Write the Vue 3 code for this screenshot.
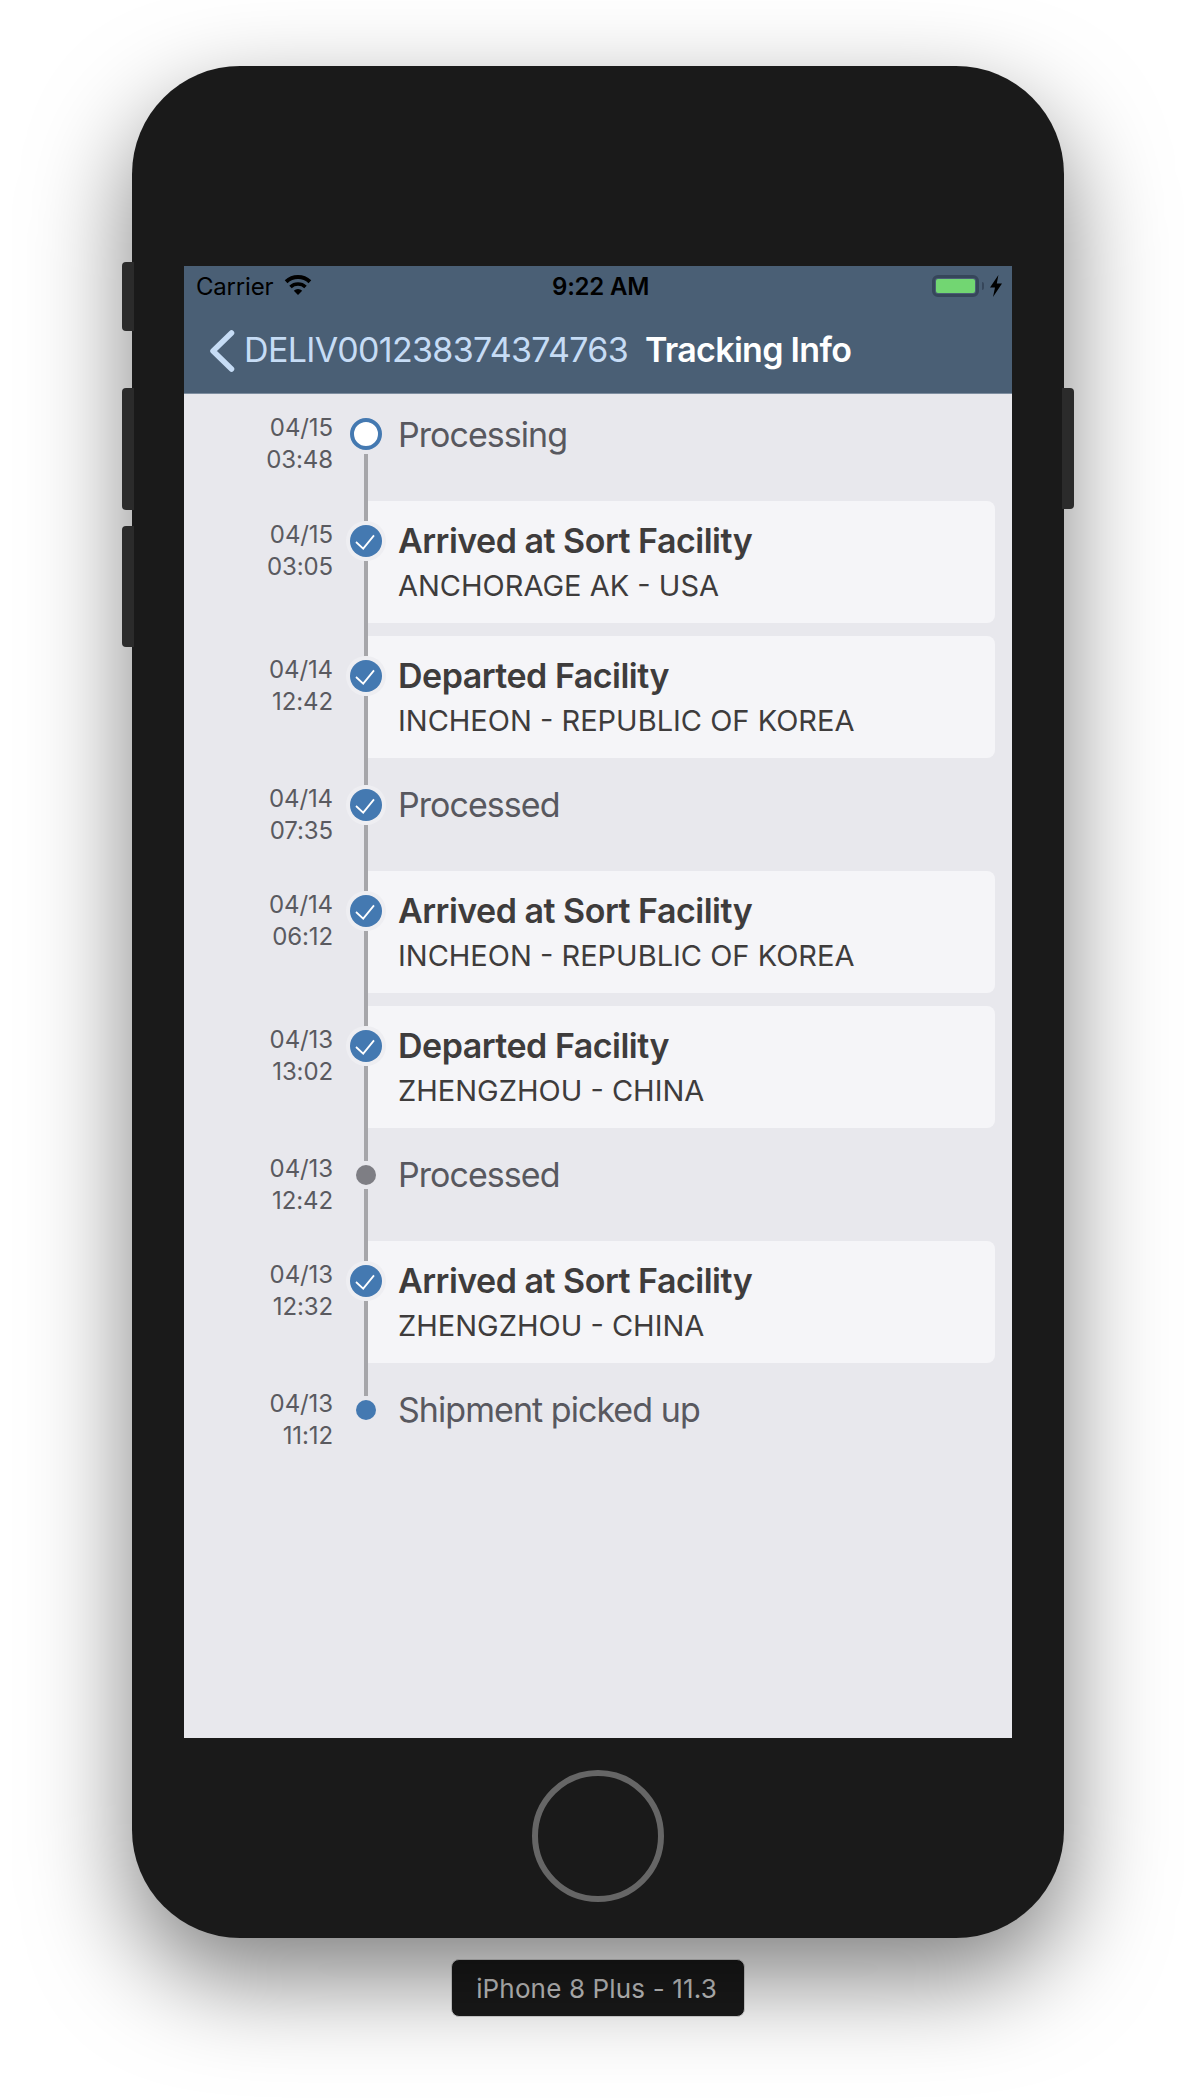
<template>
  <div class="page">
    <div class="phone">
      <div class="btn btn-mute"></div>
      <div class="btn btn-up"></div>
      <div class="btn btn-down"></div>
      <div class="btn btn-power"></div>

      <div class="screen">
        <div class="status">
          <span class="carrier">Carrier</span>
          <svg class="wifi" viewBox="0 0 28 20" width="28" height="20">
            <path d="M2.1 6.7 A17.5 17.5 0 0 1 25.9 6.7" stroke="#000" stroke-width="4" fill="none" />
            <path d="M6.5 12 A11 11 0 0 1 21.5 12" stroke="#000" stroke-width="3.6" fill="none" />
            <path d="M14 20 L9.8 15.8 A6 6 0 0 1 18.2 15.8 Z" fill="#000" />
          </svg>
          <span class="clock">9:22 AM</span>
          <div class="battery"><div class="battery-fill"></div></div>
          <div class="battery-cap"></div>
          <svg class="bolt" viewBox="0 0 12 22" width="12" height="22">
            <path d="M8.4 0 L0 12.6 L5 12.6 L3 22 L12 8.4 L6.8 8.4 Z" fill="#000" />
          </svg>
        </div>
        <div class="nav">
          <svg class="chevron" viewBox="0 0 26 42" width="26" height="42">
            <path d="M22.5 3 L4 21 L22.5 39" stroke="#c6dcf5" stroke-width="5.5" stroke-linecap="round" stroke-linejoin="round" fill="none" />
          </svg>
          <span class="back">DELIV001238374374763</span>
          <span class="title">Tracking Info</span>
        </div>

        <div class="list">
          <div v-for="(ev, i) in events" :key="i" class="row" :class="[ev.place ? 'with-card' : 'plain', 'k-' + ev.kind]">
            <div class="time">
              <div>{{ ev.date }}</div>
              <div>{{ ev.time }}</div>
            </div>
            <div class="rail">
              <div class="seg seg-top" :class="{ hidden: i === 0 }"></div>
              <div class="node">
                <div class="dot">
                  <svg v-if="ev.kind === 'check'" viewBox="0 0 32 32" width="32" height="32">
                    <path d="M6 17 L13.2 23.6 L24 10.4" stroke="#fff" stroke-width="1.8" fill="none" />
                  </svg>
                </div>
              </div>
              <div class="seg seg-bottom" :class="{ hidden: i === events.length - 1 }"></div>
            </div>
            <div v-if="ev.place" class="card">
              <div class="card-title">{{ ev.label }}</div>
              <div class="card-place">{{ ev.place }}</div>
            </div>
            <div v-else class="plain-label">{{ ev.label }}</div>
          </div>
        </div>
      </div>

      <div class="chin">
        <div class="home"></div>
      </div>
    </div>
    <div class="device-label">iPhone 8 Plus - 11.3</div>
  </div>
</template>

<script setup>
const events = [
  { date: '04/15', time: '03:48', label: 'Processing', kind: 'ring' },
  { date: '04/15', time: '03:05', label: 'Arrived at Sort Facility', place: 'ANCHORAGE AK - USA', kind: 'check' },
  { date: '04/14', time: '12:42', label: 'Departed Facility', place: 'INCHEON - REPUBLIC OF KOREA', kind: 'check' },
  { date: '04/14', time: '07:35', label: 'Processed', kind: 'check' },
  { date: '04/14', time: '06:12', label: 'Arrived at Sort Facility', place: 'INCHEON - REPUBLIC OF KOREA', kind: 'check' },
  { date: '04/13', time: '13:02', label: 'Departed Facility', place: 'ZHENGZHOU - CHINA', kind: 'check' },
  { date: '04/13', time: '12:42', label: 'Processed', kind: 'gray' },
  { date: '04/13', time: '12:32', label: 'Arrived at Sort Facility', place: 'ZHENGZHOU - CHINA', kind: 'check' },
  { date: '04/13', time: '11:12', label: 'Shipment picked up', kind: 'blue' }
]
</script>

<style>
html, body {
  margin: 0;
  background: #fff;
}
</style>

<style scoped>
.page {
  height: 2100px;
  overflow: hidden;
  padding-top: 66px;
  box-sizing: border-box;
  display: flex;
  flex-direction: column;
  align-items: center;
  font-family: Inter, "Liberation Sans", sans-serif;
}

.phone {
  position: relative;
  width: 932px;
  box-sizing: border-box;
  padding: 200px 52px 0;
  background: #1a1a1a;
  border-radius: 108px;
  box-shadow: 0 40px 100px rgba(0, 0, 0, 0.5);
}

.btn {
  position: absolute;
  width: 12px;
  background: #2b2b2b;
}

.btn-mute { left: -10px; top: 196px; height: 69px; border-radius: 4px 0 0 4px; }
.btn-up { left: -10px; top: 322px; height: 122px; border-radius: 4px 0 0 4px; }
.btn-down { left: -10px; top: 460px; height: 121px; border-radius: 4px 0 0 4px; }
.btn-power { right: -10px; top: 322px; height: 121px; border-radius: 0 4px 4px 0; }

.screen {
  height: 1472px;
  background: #e8e8ed;
  display: flex;
  flex-direction: column;
}

.status {
  height: 40px;
  flex: none;
  box-sizing: border-box;
  background: #4a5f75;
  display: flex;
  align-items: center;
  padding: 1px 10px 0 12px;
  color: #000;
  font-size: 24px;
}

.carrier {
  width: 88px;
  letter-spacing: -0.2px;
}

.wifi {
  margin-top: -3px;
}

.clock {
  margin-left: 240px;
  font-weight: 600;
  width: 98px;
  white-space: nowrap;
  letter-spacing: -0.2px;
}

.battery {
  margin-left: 282px;
  width: 47px;
  height: 22px;
  box-sizing: border-box;
  border: 3px solid #36465a;
  border-radius: 6px;
  padding: 1px;
  display: flex;
  margin-top: -2px;
}

.battery-fill {
  flex: 1;
  background: #72d672;
  border-radius: 2px;
}

.battery-cap {
  width: 2px;
  height: 8px;
  margin-left: 3px;
  margin-top: -2px;
  background: #36465a;
  border-radius: 0 2px 2px 0;
}

.bolt {
  margin-left: 6px;
  margin-top: -2px;
}

.nav {
  height: 88px;
  flex: none;
  box-sizing: border-box;
  background: #4a5f75;
  border-bottom: 1px solid #7e8ea0;
  display: flex;
  align-items: center;
  font-size: 34px;
  padding-left: 25px;
  white-space: nowrap;
}

.chevron {
  flex: none;
  margin-top: 2px;
}

.back {
  margin-left: 9px;
  color: #c6dcf5;
  width: 401px;
  letter-spacing: -0.66px;
}

.title {
  color: #fff;
  font-weight: 600;
  letter-spacing: -0.7px;
}

.list {
  padding-top: 6px;
}

.row {
  display: flex;
  align-items: stretch;
}

.row.plain {
  height: 100px;
}

.row.with-card {
  height: 135px;
}

.row:first-child {
  height: 101px;
}

.time {
  width: 149px;
  flex: none;
  text-align: right;
  font-size: 24px;
  line-height: 32px;
  color: #5a5a60;
  box-sizing: border-box;
  padding-top: 12px;
  letter-spacing: -0.1px;
}

.with-card .time {
  padding-top: 18px;
}

.rail {
  width: 32px;
  flex: none;
  margin-left: 17px;
  display: flex;
  flex-direction: column;
  align-items: center;
  position: relative;
  z-index: 1;
}

.seg {
  width: 4px;
  background: #a6a6aa;
}

.seg.hidden {
  background: transparent;
}

.seg-top {
  height: 20px;
  flex: none;
}

.plain.k-check .seg-top,
.plain.k-ring .seg-top {
  height: 14px;
}

.seg-bottom {
  flex: 1;
}

.node {
  height: 28px;
  flex: none;
  display: flex;
  align-items: center;
  justify-content: center;
}

.k-check .node,
.k-ring .node {
  height: 40px;
}

.dot {
  border-radius: 50%;
  box-sizing: border-box;
  flex: none;
}

.dot svg {
  display: block;
}

.k-check .dot {
  width: 32px;
  height: 32px;
  background: #4479b1;
  box-shadow: 0 0 0 4px #eeeef2;
}

.k-ring .dot {
  width: 32px;
  height: 32px;
  background: #fff;
  border: 4px solid #4479b1;
}

.k-gray .dot {
  width: 20px;
  height: 20px;
  background: #7e7e84;
}

.k-blue .dot {
  width: 20px;
  height: 20px;
  background: #4479b1;
}

.plain-label {
  margin-left: 16px;
  padding-top: 14px;
  font-size: 34px;
  line-height: 40px;
  color: #58585f;
  white-space: nowrap;
  letter-spacing: -0.95px;
}

.row:first-child .plain-label {
  padding-top: 15px;
}

.card {
  flex: none;
  width: 627px;
  height: 122px;
  margin-left: -14px;
  box-sizing: border-box;
  padding: 18px 0 0 30px;
  background: #f5f5f8;
  border-radius: 0 8px 8px 0;
  color: #3e3c3c;
  white-space: nowrap;
}

.card-title {
  font-size: 34px;
  line-height: 44px;
  font-weight: 600;
  letter-spacing: -0.5px;
}

.card-place {
  font-size: 29px;
  line-height: 45px;
}

.chin {
  height: 200px;
  box-sizing: border-box;
  padding-top: 32px;
  display: flex;
  justify-content: center;
}

.home {
  width: 132px;
  height: 132px;
  box-sizing: border-box;
  border: 6px solid #666;
  border-radius: 50%;
}

.device-label {
  margin-top: 21px;
  width: 294px;
  height: 58px;
  box-sizing: border-box;
  background: #1a1a1a;
  border-radius: 8px;
  border: 1px solid #d8d8d8;
  color: #ccc;
  font-size: 26px;
  line-height: 57px;
  text-align: center;
  padding-right: 3px;
  letter-spacing: 0.15px;
}
</style>
